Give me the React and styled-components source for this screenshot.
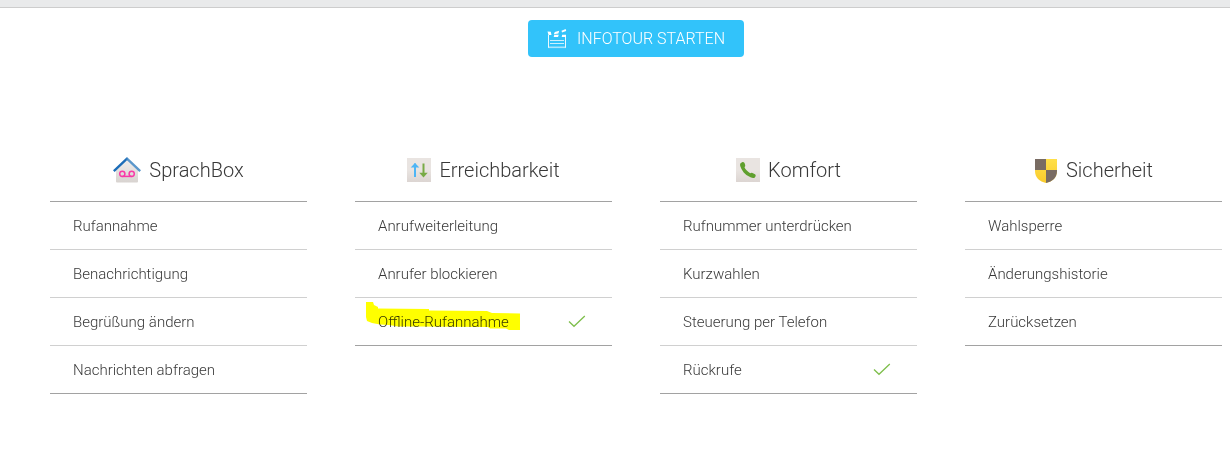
import React from "react";
import styled, { createGlobalStyle } from "styled-components";

const GlobalStyle = createGlobalStyle`
  *, *::before, *::after { box-sizing: border-box; }
  body {
    margin: 0;
    background: #fff;
    color: #383838;
    font-family: Roboto, "Liberation Sans", sans-serif;
    font-weight: 300;
  }
`;

const TopStrip = styled.header`
  height: 8px;
  background: #e9eaeb;
  border-bottom: 1px solid #cdcdcd;
`;

const Page = styled.main`
  padding: 12px 8px 48px 50px;
`;

const Actions = styled.div`
  display: flex;
  justify-content: center;
  margin-bottom: 96px;
`;

const TourButton = styled.button`
  display: flex;
  align-items: center;
  gap: 10px;
  height: 37px;
  padding: 0 19px;
  border: 0;
  border-radius: 4px;
  background: #32c3fa;
  color: #fff;
  font: inherit;
  font-size: 16px;
  line-height: 24px;
  cursor: pointer;
`;

const Columns = styled.div`
  display: grid;
  grid-template-columns: repeat(4, 1fr);
  align-items: start;
  gap: 48px;
`;

const Heading = styled.h2`
  display: flex;
  align-items: center;
  justify-content: center;
  gap: 8px;
  height: 48px;
  margin: 0;
  padding-bottom: 14px;
  font-size: 20px;
  font-weight: 300;
  line-height: 32px;
`;

const List = styled.ul`
  margin: 0;
  padding: 0;
  list-style: none;
  border-top: 1px solid #a2a2a2;
  border-bottom: 1px solid #a2a2a2;
`;

const Item = styled.li`
  position: relative;
  & + & { border-top: 1px solid #d0d0d0; }
`;

const ItemLink = styled.a`
  display: flex;
  align-items: center;
  justify-content: space-between;
  height: 47px;
  padding: 0 26px 0 23px;
  color: inherit;
  font-size: 15px;
  line-height: 24px;
  text-decoration: none;
`;

const Marker = styled.svg`
  position: absolute;
  top: 4px;
  left: 11px;
  pointer-events: none;
  mix-blend-mode: multiply;
`;

const ClapperIcon = () => (
  <svg width="20" height="20" viewBox="0 0 20 20" fill="none" aria-hidden="true">
    <path d="M1.500 6v12.500M18.500 6v12.500" stroke="#fff" strokeOpacity=".9" />
    <path d="M1 18.300h18" stroke="#fff" strokeOpacity=".6" strokeWidth="1.600" />
    <path d="M3 11.500h14M3 14.500h14" stroke="#fff" strokeOpacity=".75" />
    <path d="M.5 2.500l3.300.2.700 3.300H1.500zM7.800 3l4.400-1.200-.8 2.600L6.800 5.300zM14.500 1.700L18.700.1l.5 1.900-4.200 1.500zM7.300 5.800h4.500L11 7.900H6.700zM15.200 5.800H19v2.100h-4.300z" fill="#fff" />
  </svg>
);

const VoiceBoxIcon = () => (
  <svg width="28" height="26" viewBox="0 0 28 26" fill="none" aria-hidden="true">
    <defs>
      <linearGradient id="house" x1="0" y1="0" x2="0" y2="1">
        <stop offset="0" stopColor="#efedec" />
        <stop offset="1" stopColor="#d8d3d0" />
      </linearGradient>
      <linearGradient id="roof" x1="0" y1="0" x2="1" y2="0">
        <stop offset=".45" stopColor="#1c6db8" />
        <stop offset=".55" stopColor="#5b97cb" />
      </linearGradient>
    </defs>
    <path d="M14 2.500L3 13v11.500q0 1 1 1h20q1 0 1-1V13z" fill="url(#house)" />
    <path d="M.8 14.200L14 1.700l13.200 12.500" stroke="url(#roof)" strokeWidth="2.400" />
    <g stroke="#f93aa8" strokeWidth="1.500">
      <circle cx="9.300" cy="16.800" r="2.600" />
      <circle cx="18.700" cy="16.800" r="2.600" />
      <path d="M9.300 19.400h9.400" />
    </g>
  </svg>
);

const Tile = ({ id }) => (
  <>
    <defs>
      <linearGradient id={id} x1="0" y1="0" x2="0" y2="1">
        <stop offset=".5" stopColor="#e9e4e1" />
        <stop offset="1" stopColor="#dcd5d2" />
      </linearGradient>
    </defs>
    <rect width="24" height="24" fill={`url(#${id})`} />
  </>
);

const ArrowsIcon = () => (
  <svg width="24" height="24" viewBox="0 0 24 24" fill="none" aria-hidden="true">
    <Tile id="tile-arrows" />
    <path d="M7 5.500h2V19H7z" fill="#4db5f5" />
    <path d="M8 5l4.300 4.600H3.700z" fill="#4db5f5" />
    <path d="M15.500 5.500h2V16h-2z" fill="#78ab46" />
    <path d="M16.500 19.500l4.200-4.700h-8.400z" fill="#78ab46" />
  </svg>
);

const PhoneIcon = () => (
  <svg width="24" height="24" viewBox="0 0 24 24" fill="none" aria-hidden="true">
    <Tile id="tile-phone" />
    <path d="M4.500 5.200L6.500 4Q7.800 3.800 8.500 5L9.200 7Q9.500 8.200 8.500 9.200Q9.200 11 10.800 12.600Q12.500 14.300 14.200 15.300Q15.300 14.400 16.500 14.900L19 16.300Q20 17 19.600 18.200L18.600 19.700Q17 20.400 14.500 19.300Q10.500 17.800 7.700 14.400Q5.200 11.400 4.200 8Q3.800 6.300 4.500 5.200z" fill="#5f9f2e" />
  </svg>
);

const ShieldIcon = () => (
  <svg width="24" height="26" viewBox="0 -2 24 26" aria-hidden="true">
    <defs>
      <clipPath id="shield">
        <path d="M1 0h22v12c0 6.500-4.500 10.500-11 12C5.500 22.500 1 18.500 1 12z" />
      </clipPath>
      <linearGradient id="gold" x1="0" y1="0" x2="0" y2="1">
        <stop offset="0" stopColor="#ffe04a" />
        <stop offset="1" stopColor="#f9cb2b" />
      </linearGradient>
    </defs>
    <g clipPath="url(#shield)">
      <path d="M0 0h24v24H0z" fill="url(#gold)" />
      <path d="M0 0h12v11H0zM12 11h12v13H12z" fill="#796c63" />
    </g>
  </svg>
);

const CheckIcon = () => (
  <svg width="18" height="14" viewBox="0 0 18 14" fill="none" role="img" aria-label="Aktiv">
    <path d="M1 6.500l5 4.800L16.800 1" stroke="#7fbf4d" strokeWidth="1.300" />
  </svg>
);

const HighlightStroke = () => (
  <Marker width="154" height="28" viewBox="0 0 154 28" aria-hidden="true">
    <path
      d="M0 0h7l1 3 4 2v1.500l51 .5v1.500l58 .5 5 2 28 .5v17h-10l-4-2h-16l-2-1.500-72-.5H32l-9-1.500-9-.5-8-1.500-5-2-1-4z"
      fill="#ff0"
    />
  </Marker>
);

const sections = [
  {
    title: "SprachBox",
    Icon: VoiceBoxIcon,
    items: [
      { label: "Rufannahme" },
      { label: "Benachrichtigung" },
      { label: "Begrüßung ändern" },
      { label: "Nachrichten abfragen" },
    ],
  },
  {
    title: "Erreichbarkeit",
    Icon: ArrowsIcon,
    items: [
      { label: "Anrufweiterleitung" },
      { label: "Anrufer blockieren" },
      { label: "Offline-Rufannahme", active: true, marked: true },
    ],
  },
  {
    title: "Komfort",
    Icon: PhoneIcon,
    items: [
      { label: "Rufnummer unterdrücken" },
      { label: "Kurzwahlen" },
      { label: "Steuerung per Telefon" },
      { label: "Rückrufe", active: true },
    ],
  },
  {
    title: "Sicherheit",
    Icon: ShieldIcon,
    items: [
      { label: "Wahlsperre" },
      { label: "Änderungshistorie" },
      { label: "Zurücksetzen" },
    ],
  },
];

export default function App() {
  return (
    <>
      <GlobalStyle />
      <TopStrip />
      <Page>
        <Actions>
          <TourButton type="button">
            <ClapperIcon />
            INFOTOUR STARTEN
          </TourButton>
        </Actions>
        <Columns>
          {sections.map(({ title, Icon, items }) => (
            <section key={title}>
              <Heading>
                <Icon />
                {title}
              </Heading>
              <List>
                {items.map(({ label, active, marked }) => (
                  <Item key={label}>
                    <ItemLink href="#">
                      {label}
                      {active && <CheckIcon />}
                    </ItemLink>
                    {marked && <HighlightStroke />}
                  </Item>
                ))}
              </List>
            </section>
          ))}
        </Columns>
      </Page>
    </>
  );
}
